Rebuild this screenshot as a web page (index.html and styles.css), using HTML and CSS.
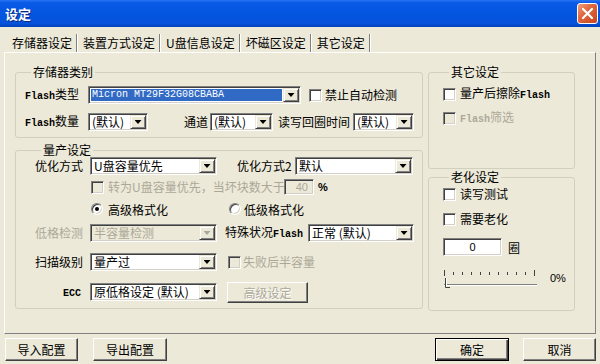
FILE: index.html
```html
<!DOCTYPE html>
<html><head><meta charset="utf-8"><title>设定</title><link rel="stylesheet" href="styles.css"></head>
<body>
<div class="window">
  <div class="titlebar">
    <span class="title">设定</span>
    <span class="close"><svg width="13" height="13" viewBox="0 0 13 13"><path d="M2 2L11 11M11 2L2 11" stroke="#fff" stroke-width="2.2" stroke-linecap="round"/></svg></span>
  </div>
  <div class="tabs">
    <span class="tab active">存储器设定</span>
    <span class="tab">装置方式设定</span>
    <span class="tab">U盘信息设定</span>
    <span class="tab">坏磁区设定</span>
    <span class="tab">其它设定</span>
  </div>
  <div class="panel">
    <div class="col-left">
      <fieldset class="group g-type">
        <legend>存储器类别</legend>
        <div class="row r-t1">
          <span class="lbl w63"><span class="mono">Flash</span>类型</span>
          <span class="combo w213"><span class="val hl"><span class="mono thin">Micron MT29F32G08CBABA</span></span><span class="btn"><i class="arr"></i></span></span>
          <span class="cb ml8"></span><span class="cbt">禁止自动检测</span>
        </div>
        <div class="row r-t2">
          <span class="lbl w63"><span class="mono">Flash</span>数量</span>
          <span class="combo w60"><span class="val">(默认)</span><span class="btn"><i class="arr"></i></span></span>
          <span class="lbl ml36 w26">通道</span>
          <span class="combo w63"><span class="val">(默认)</span><span class="btn"><i class="arr"></i></span></span>
          <span class="lbl ml5 w75">读写回圈时间</span>
          <span class="combo w61"><span class="val">(默认)</span><span class="btn"><i class="arr"></i></span></span>
        </div>
      </fieldset>
      <fieldset class="group g-prod">
        <legend>量产设定</legend>
        <div class="row r-a">
          <span class="lbl w55">优化方式</span>
          <span class="combo w127"><span class="val">U盘容量优先</span><span class="btn"><i class="arr"></i></span></span>
          <span class="lbl ml20 w58">优化方式2</span>
          <span class="combo w118"><span class="val">默认</span><span class="btn"><i class="arr"></i></span></span>
        </div>
        <div class="row r-b">
          <span class="cb dis ml56"></span>
          <span class="cbt dis w176">转为U盘容量优先，当坏块数大于</span>
          <span class="edit dis w30">40</span>
          <span class="pct">%</span>
        </div>
        <div class="row r-c">
          <span class="radio on ml56"></span><span class="rt">高级格式化</span>
          <span class="radio ml61"></span><span class="rt2">低级格式化</span>
        </div>
        <div class="row r-d">
          <span class="lbl dis w55">低格检测</span>
          <span class="combo dis w127"><span class="val">半容量检测</span><span class="btn"><i class="arr"></i></span></span>
          <span class="lbl ml8 w83">特殊状况<span class="mono">Flash</span></span>
          <span class="combo w106"><span class="val">正常 (默认)</span><span class="btn"><i class="arr"></i></span></span>
        </div>
        <div class="row r-e">
          <span class="lbl w55">扫描级别</span>
          <span class="combo w127"><span class="val">量产过</span><span class="btn"><i class="arr"></i></span></span>
          <span class="cb dis ml11"></span><span class="cbt dis">失败后半容量</span>
        </div>
        <div class="row r-f">
          <span class="lbl w55 right"><span class="mono">ECC</span></span>
          <span class="combo w127"><span class="val">原低格设定 (默认)</span><span class="btn"><i class="arr"></i></span></span>
          <span class="pbtn dis ml10">高级设定</span>
        </div>
      </fieldset>
    </div>
    <div class="col-right">
      <fieldset class="group g-other">
        <legend>其它设定</legend>
        <div class="row r-o1"><span class="cb"></span><span class="cbt">量产后擦除<span class="mono">Flash</span></span></div>
        <div class="row r-o2"><span class="cb dis"></span><span class="cbt dis"><span class="mono">Flash</span>筛选</span></div>
      </fieldset>
      <fieldset class="group g-age">
        <legend>老化设定</legend>
        <div class="row r-g1"><span class="cb"></span><span class="cbt">读写测试</span></div>
        <div class="row r-g2"><span class="cb"></span><span class="cbt">需要老化</span></div>
        <div class="row r-g3"><span class="edit w59 center">0</span><span class="quan">圈</span></div>
        <div class="row r-g4">
          <svg class="slider" width="100" height="24" viewBox="0 0 100 24">
            <g stroke="#404040" stroke-width="1">
              <path d="M2.5 5V11M11.5 7V10M20.5 7V10M29.5 7V10M38.5 7V10M47.5 7V10M56.5 7V10M65.5 7V10M74.5 7V10M83.5 7V10M92.5 5V11"/>
            </g>
            <path d="M2 19.5H95" stroke="#808080"/>
            <path d="M2 20.5H95" stroke="#fff"/>
            <path d="M3.5 13V22.5H8" stroke="#404040" fill="none"/>
            <path d="M4.5 13V21.5" stroke="#fff"/>
          </svg>
          <span class="pct0">0%</span>
        </div>
      </fieldset>
    </div>
  </div>
  <div class="footer">
    <span class="pbtn b-imp">导入配置</span>
    <span class="pbtn b-exp">导出配置</span>
    <span class="pbtn def b-ok">确定</span>
    <span class="pbtn b-cancel">取消</span>
  </div>
</div>
</body></html>
```
FILE: styles.css
```css
*{box-sizing:border-box}
html,body{margin:0;padding:0}
body{width:600px;height:364px;overflow:hidden;background:#ece9d8;font-family:"Noto Sans CJK SC","Noto Sans",sans-serif;font-size:12px;color:#000}
.window{display:flex;flex-direction:column;height:364px}
.titlebar{height:27px;flex:none;display:flex;align-items:center;justify-content:space-between;padding:0 2px 0 5px;background:linear-gradient(#2a74f2 0,#0a5ae8 10%,#0455e0 45%,#0553dc 85%,#0342b8 100%)}
.title{color:#fff;font-weight:bold;font-size:13px;line-height:16px;text-shadow:1px 1px #0a2a80}
.close{width:21px;height:21px;border:1px solid #fff;border-radius:3px;background:linear-gradient(135deg,#eea080 0,#e0683f 40%,#c9461f 100%);display:flex;align-items:center;justify-content:center}
.tabs{height:25px;flex:none;display:flex;align-items:flex-end;padding-left:7px}
.tab{height:18px;line-height:18px;padding:0 4px 0 5px;border-right:1px solid #808080;box-shadow:1px 0 #fff;margin-right:1px;white-space:nowrap}
.panel{flex:none;height:282px;margin:0 4px;border:1px solid;border-color:#fff #808080 #808080 #fff;display:flex;padding:12px 0 0 10px}
.col-left{width:408px;flex:none}
.col-right{width:147px;flex:none;margin-left:5px}
.group{margin:0;padding:0;border:1px solid #d0d0bf;border-radius:3px;min-width:0}
.group legend{margin-left:6px;padding:0 2px;line-height:14px;height:14px}
.g-type{padding:0 0 6px 9px}
.g-prod{margin-top:5px;padding:0 0 7px 19px}
.g-other{padding:0 0 42px 14px}
.g-age{margin-top:1px;padding:0 0 25px 14px}
.row{display:flex;align-items:center;height:18px;white-space:nowrap}
.r-t1{margin-top:7px}
.r-t2{margin-top:9px}
.r-a{margin-top:0}
.r-b{margin-top:3px}
.r-c{margin-top:4px}
.r-d{margin-top:6px}
.r-e{margin-top:11px}
.r-f{margin-top:12px}
.r-o1{margin-top:7px;height:16px}
.r-o2{margin-top:8px;height:16px}
.r-g1{margin-top:2px;height:16px}
.r-g2{margin-top:9px;height:16px}
.r-g3{margin-top:11px}
.r-g4{margin-top:5px;height:24px;align-items:flex-start}
.lbl{flex:none;line-height:18px}
.right{text-align:right;padding-right:9px}
.mono{font-family:"Liberation Mono",monospace;font-size:10px;font-weight:bold}
.mono.thin{font-weight:normal}
.dis{color:#aca899}
.w26{width:26px}.w55{width:55px}.w58{width:58px}.w63{width:63px}.w75{width:75px}.w83{width:83px}
.w60{width:60px}.w61{width:61px}.w106{width:106px}.w118{width:118px}.w127{width:127px}.w213{width:213px}
.w30{width:30px}.w59{width:59px}.w176{width:176px}
.ml5{margin-left:5px}.ml8{margin-left:8px}.ml10{margin-left:10px}.ml11{margin-left:11px}.ml20{margin-left:20px}.ml36{margin-left:36px}.ml56{margin-left:56px}.ml61{margin-left:61px}
.combo{flex:none;display:flex;align-items:center;height:18px;padding:1px;border:1px solid;border-color:#808080 #fff #fff #808080;box-shadow:inset 1px 1px #404040,inset -1px -1px #d4d0c8;background:#fff}
.combo .val{flex:1;min-width:0;line-height:14px;padding-left:2px;margin:0;align-self:stretch;display:flex;align-items:center}
.combo .val.hl{background:#316ac5;color:#fff;margin:1px;padding-left:1px}
.combo.dis{background:#ece9d8}
.btn{flex:none;width:16px;height:14px;background:#ece9d8;border:1px solid;border-color:#ece9d8 #404040 #404040 #ece9d8;box-shadow:inset 1px 1px #fff,inset -1px -1px #808080;display:flex;align-items:center;justify-content:center}
.arr{display:block;width:7px;height:4px;background:#000;clip-path:polygon(0 0,100% 0,50% 100%)}
.combo.dis .arr{background:#aca899}
.cb{flex:none;width:13px;height:13px;background:#fff;border:1px solid;border-color:#808080 #fff #fff #808080;box-shadow:inset 1px 1px #404040,inset -1px -1px #d4d0c8}
.cb.dis{background:#ece9d8}
.cbt{margin-left:4px;line-height:16px}
.r-t1 .cbt{margin-left:3px}
.r-e .cbt{margin-left:2px}
.edit{flex:none;height:16px;border:1px solid;border-color:#808080 #fff #fff #808080;box-shadow:inset 1px 1px #404040,inset -1px -1px #d4d0c8;background:#fff;line-height:14px;text-align:right;padding-right:5px;font-family:"Liberation Sans",sans-serif;font-size:11px}
.edit.dis{background:#ece9d8}
.edit.center{text-align:center;padding:0}
.r-g3 .edit{height:18px;line-height:16px}
.pct{margin-left:4px;font-family:"Liberation Sans",sans-serif;font-size:11px;font-weight:bold}
.quan{margin-left:6px}
.radio{flex:none;width:12px;height:12px;border-radius:50%;background:#fff;border:1px solid;border-color:#808080 #fff #fff #808080;box-shadow:inset 1px 1px #404040,inset -1px -1px #d4d0c8;position:relative}
.radio.on::after{content:"";position:absolute;left:3px;top:3px;width:4px;height:4px;border-radius:50%;background:#000}
.rt{margin-left:5px}
.rt2{margin-left:3px}
.slider{flex:none;display:block;margin-left:-1px;margin-top:4px}
.pct0{margin-left:8px;margin-top:11px;font-family:"Liberation Sans",sans-serif;font-size:11px;line-height:12px}
.pbtn{flex:none;display:flex;align-items:center;justify-content:center;height:21px;width:81px;background:#ece9d8;border:1px solid;border-color:#fff #404040 #404040 #fff;box-shadow:inset -1px -1px #808080}
.pbtn.dis{color:#aca899;text-shadow:1px 1px #fff}
.footer{flex:none;display:flex;align-items:flex-start;padding:4px 4px 0 5px}
.footer .pbtn{height:23px}
.b-imp{width:73px}
.b-exp{width:74px;margin-left:15px}
.b-ok{width:74px;margin-left:auto}
.b-cancel{width:73px;margin-left:14px}
.pbtn.def{border:1px solid #000;box-shadow:inset 1px 1px #fff,inset -1px -1px #404040,inset -2px -2px #808080}
```
